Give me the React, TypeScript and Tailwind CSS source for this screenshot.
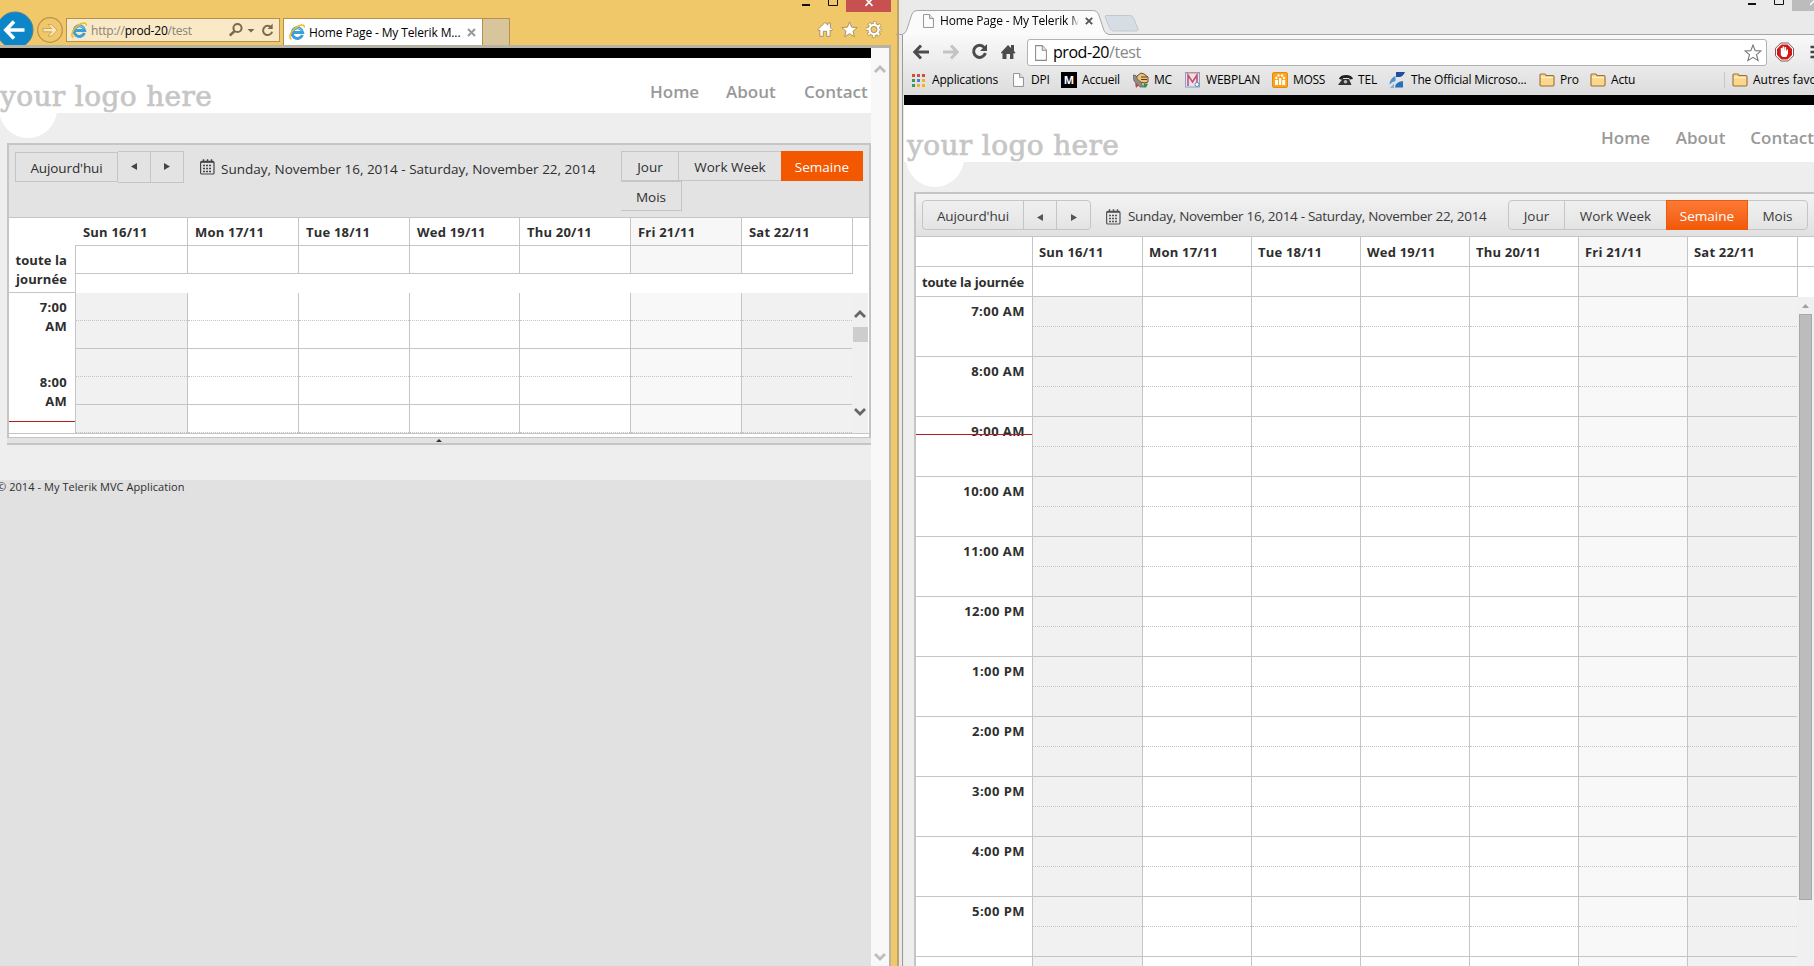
import type { ReactNode } from "react";
import clsx from "clsx";

const days = [
	{ label: "Sun 16/11", ie: "w-[112px]", chrome: "w-[110px]", off: true },
	{ label: "Mon 17/11", ie: "w-[111px]", chrome: "w-[109px]" },
	{ label: "Tue 18/11", ie: "w-[111px]", chrome: "w-[109px]" },
	{ label: "Wed 19/11", ie: "w-[110px]", chrome: "w-[109px]" },
	{ label: "Thu 20/11", ie: "w-[111px]", chrome: "w-[109px]" },
	{ label: "Fri 21/11", ie: "w-[111px]", chrome: "w-[109px]", today: true },
	{ label: "Sat 22/11", ie: "w-[111px]", chrome: "w-[110px]", off: true },
];

const hours = [
	"7:00 AM",
	"8:00 AM",
	"9:00 AM",
	"10:00 AM",
	"11:00 AM",
	"12:00 PM",
	"1:00 PM",
	"2:00 PM",
	"3:00 PM",
	"4:00 PM",
	"5:00 PM",
	"6:00 PM",
];

const RANGE = "Sunday, November 16, 2014 - Saturday, November 22, 2014";

function IeLogo() {
	return (
		<svg width="16" height="16" viewBox="0 0 16 16" fill="none" className="shrink-0">
			<path
				d="M13.4 11A5.300 5.300 0 1 1 13.700 8.600H4.6"
				stroke="#3d9fd6"
				strokeWidth="3"
			/>
			<path d="M3.400 6.800a5.200 5.200 0 0 1 9.400-.2" stroke="#8fd0f2" strokeWidth="1" />
			<path
				d="M2.600 15.200C-1 14.600 1.400 8.200 6 4.200 10.2.6 16 -.4 15.200 3.600"
				stroke="#f2b81c"
				strokeWidth="1.5"
			/>
		</svg>
	);
}

function CalendarIcon({ color }: { color: string }) {
	return (
		<svg width="15" height="16" viewBox="0 0 15 16" fill="none" className="shrink-0">
			<rect x="0.6" y="2.4" width="13.4" height="12.6" rx="1.3" stroke={color} strokeWidth="1.2" />
			<path d="M1 3.2h13" stroke={color} strokeWidth="1.2" />
			<path d="M3.5 .3v3M7.5 .3v3M11.5 .3v3" stroke={color} strokeWidth="1.5" />
			<path
				d="M6 6.500h2M9 6.500h2M3 9.500h2M6 9.500h2M9 9.500h2M3 12.500h2M6 12.500h2M9 12.500h2M3 6.500h2"
				stroke={color}
				strokeWidth="1.600"
			/>
		</svg>
	);
}

function PageIcon({ small }: { small?: boolean }) {
	return (
		<svg
			width={small ? 11 : 12}
			height={small ? 14 : 16}
			viewBox="0 0 12 15"
			preserveAspectRatio="none"
			className="shrink-0"
		>
			<path d="M.6 .6h6.6l4.2 4.3v9.5H.6z" fill="#fdfdfd" stroke="#8a8a8a" strokeWidth="1" />
			<path d="M7.2 .6v4.3h4.2" fill="#e4e4e4" stroke="#8a8a8a" strokeWidth="1" />
		</svg>
	);
}

function FolderIcon() {
	return (
		<svg width="16" height="14" viewBox="0 0 16 14">
			<path
				d="M1 2.2Q1 1 2.2 1h3.4Q6.6 1 7 2.6h6.8Q15 2.6 15 3.8v8Q15 13 13.8 13H2.2Q1 13 1 11.8z"
				fill="#fbd78c"
				stroke="#9a7038"
				strokeWidth="1.1"
			/>
			<path d="M2 4.4h12" stroke="#fff0c6" strokeWidth="1.4" />
		</svg>
	);
}

function Triangle({ left, color = "#454545" }: { left?: boolean; color?: string }) {
	return (
		<svg width="6" height="7" viewBox="0 0 6 7">
			<path d={left ? "M6 0v7L0 3.5z" : "M0 0v7l6-3.5z"} fill={color} />
		</svg>
	);
}

function Chevron({ down, color }: { down?: boolean; color: string }) {
	return (
		<svg width="12" height="10" viewBox="0 0 12 10" fill="none">
			<path d={down ? "M1 2l5 5 5-5" : "M1 8l5-5 5 5"} stroke={color} strokeWidth="2.8" />
		</svg>
	);
}

function SiteHeader({ chrome }: { chrome?: boolean }) {
	return (
		<>
			<div className="h-2.5 bg-black" />
			<div
				className={clsx(
					"relative flex justify-between bg-white",
					chrome ? "h-[57px]" : "h-[55px]",
				)}
			>
				<div
					className={clsx(
						"absolute size-[58px] rounded-full bg-white",
						chrome ? "left-0.5 top-6" : "-left-px top-[22px]",
					)}
				/>
				<div
					className={clsx(
						"relative whitespace-nowrap font-['DejaVu_Serif',serif] text-[28px] leading-[34px] tracking-[0.37px] text-[#c6c6c6] [-webkit-text-stroke:0.7px_#c6c6c6]",
						chrome ? "ml-[3px] mt-6" : "mt-[22px]",
					)}
				>
					your logo here
				</div>
				<nav
					className={clsx(
						"flex shrink-0 text-[17px] leading-6 font-semibold text-[#999]",
						chrome ? "mt-[21px] w-[213px]" : "mt-[22px] w-[221px]",
					)}
				>
					<span className={chrome ? "w-[75px]" : "w-[76px]"}>Home</span>
					<span className={chrome ? "w-[75px]" : "w-[78px]"}>About</span>
					<span>Contact</span>
				</nav>
			</div>
		</>
	);
}

function IeToolbar() {
	return (
		<div className="flex h-[73px] border-b border-[#c5c5c5] bg-[#e3e3e3] pl-1.5 text-[13.5px] font-normal text-[#2e2e2e]">
			<div className="mt-[7px] h-[30px] w-[103px] border border-[#c5c5c5] pt-px text-center leading-[28px] tracking-[-0.1px]">
				Aujourd'hui
			</div>
			<div className="mt-1.5 flex h-8 w-[66px] border border-l-0 border-[#c5c5c5]">
				<div className="flex w-[33px] items-center justify-center border-r border-[#c5c5c5] pb-0.5">
					<Triangle left />
				</div>
				<div className="flex w-8 items-center justify-center pb-0.5">
					<Triangle />
				</div>
			</div>
			<div className="ml-4 mt-3.5">
				<CalendarIcon color="#444" />
			</div>
			<div className="ml-1.5 mt-[13px] w-[400px] whitespace-nowrap leading-[22px]">{RANGE}</div>
			<div className="mt-1.5 flex w-[243px] flex-wrap content-start text-center leading-[30px]">
				<div className="h-[30px] w-[58px] border border-[#c5c5c5]">Jour</div>
				<div className="h-[30px] w-[102px] border-y border-[#c5c5c5]">Work Week</div>
				<div className="h-[30px] w-[82px] bg-[#f35800] pt-px text-white">Semaine</div>
				<div className="h-[30px] w-[61px] border border-l-0 border-[#c5c5c5]">Mois</div>
			</div>
		</div>
	);
}

function IeScheduler() {
	return (
		<div className="ml-[7px] mt-[30px] w-[864px] border-2 border-b-0 border-[#c5c5c5] bg-white text-[13px] font-bold text-[#2e2e2e]">
			<IeToolbar />
			<div className="flex">
				<div className="w-[66px]">
					<div className="h-[75px] border-b border-[#c5c5c5] pr-2 pt-[33px] text-right leading-[19px] tracking-[0.1px]">
						toute la journée
					</div>
					<div className="relative h-[140px] pr-2 text-right leading-[19px] tracking-[0.3px]">
						<div className="ml-auto h-[75px] w-10 pt-[5px]">7:00 AM</div>
						<div className="ml-auto w-10 pt-[5px]">8:00 AM</div>
						<div className="absolute left-0 top-32 h-px w-full bg-[#b02020]" />
					</div>
				</div>
				<div>
					<div className="flex h-7 border-b border-[#c5c5c5]">
						{days.map((day, i) => (
							<div
								key={day.label}
								className={clsx(
									day.ie,
									"border-l pl-[7px] leading-7 tracking-[0.2px]",
									i === 0 ? "border-white" : "border-[#c5c5c5]",
									day.today && "bg-[#f7f7f7]",
								)}
							>
								{day.label}
							</div>
						))}
						<div className="w-px bg-[#c5c5c5]" />
					</div>
					<div className="flex h-7">
						{days.map((day) => (
							<div
								key={day.label}
								className={clsx(
									day.ie,
									"border-b border-l border-[#c5c5c5]",
									day.today && "bg-[#f7f7f7]",
								)}
							/>
						))}
						<div className="w-px bg-[#c5c5c5]" />
					</div>
					<div className="h-[19px] border-l border-[#c5c5c5]" />
					<div className="flex">
						{days.map((day) => (
							<div
								key={day.label}
								className={clsx(
									day.ie,
									"border-l border-[#c5c5c5]",
									day.off && "bg-[#f1f1f1]",
									day.today && "bg-[#f8f8f8]",
								)}
							>
								{[0, 1, 2, 3, 4].map((n) => (
									<div
										key={n}
										className={clsx("h-7 border-b border-[#c5c5c5]", n % 2 === 0 && "border-dotted")}
									/>
								))}
							</div>
						))}
						<div className="flex w-4 flex-col items-center bg-[#f0f0f0]">
							<div className="mt-4 h-[18px]">
								<Chevron color="#666" />
							</div>
							<div className="h-[15px] w-[15px] bg-[#cdcdcd]" />
							<div className="mt-[65px]">
								<Chevron down color="#666" />
							</div>
						</div>
					</div>
				</div>
			</div>
			<div className="h-1 border-t border-[#c5c5c5]" />
			<div className="-mx-0.5 flex h-2 justify-center border-b-2 border-t border-[#c5c5c5] bg-[#e3e3e3] pt-px">
				<svg width="6" height="3" viewBox="0 0 6 3">
					<path d="M0 3l3-3 3 3z" fill="#333" />
				</svg>
			</div>
		</div>
	);
}

function IeChrome() {
	return (
		<div className="flex h-[45px] overflow-hidden bg-[#f0c869] text-[12px]">
			<svg width="66" height="45" viewBox="0 0 66 45" fill="none" className="shrink-0">
				<circle cx="15" cy="30" r="18" fill="#0c86c8" stroke="#4d8596" />
				<path d="M24.5 30H7M14 21.5L5.8 30l8.2 8.5" stroke="#fff" strokeWidth="3.6" />
				<circle cx="50" cy="30" r="12.3" stroke="#b8924a" strokeWidth="1.2" />
				<path
					d="M43 28.5h8.8l-3.8-4h3.6l5.6 5.7-5.6 5.8H48l3.8-4.2H43z"
					fill="#fbe7bb"
					stroke="#c39b4f"
					strokeWidth="0.8"
				/>
			</svg>
			<div className="mt-[18px] flex h-6 w-[214px] shrink-0 items-center border border-[#b5924c] bg-[#fae9c7] pl-1">
				<IeLogo />
				<span className="ml-1 w-[138px] pt-px text-[12px] tracking-[-0.22px] text-[#8a8272]">
					http://<span className="text-black">prod-20</span>/test
				</span>
				<svg width="48" height="16" viewBox="0 0 48 16" fill="none" stroke="#7b6a4c">
					<circle cx="8.500" cy="6" r="4.1" strokeWidth="2" />
					<path d="M5.500 9.1L.8 13.500" strokeWidth="2.6" />
					<path d="M18.5 7h7L22 10.500z" fill="#7b6a4c" stroke="none" />
					<path d="M42.2 5.500a4.6 4.6 0 1 0 .9 4.2" strokeWidth="2" />
					<path d="M43.7 1.500v5.4h-5.2z" fill="#7b6a4c" stroke="none" />
				</svg>
			</div>
			<div className="ml-[3px] mt-[18px] flex w-[200px] shrink-0 items-center border border-b-0 border-[#b5924c] bg-white pl-[5px] text-black">
				<IeLogo />
				<span className="ml-1 w-[158px] whitespace-nowrap pt-px text-[12px] tracking-[-0.13px]">
					Home Page - My Telerik M...
				</span>
				<svg width="9" height="9" viewBox="0 0 9 9" stroke="#999" strokeWidth="2">
					<path d="M1 1l7 7M8 1L1 8" />
				</svg>
			</div>
			<div className="mt-[18px] w-[27px] shrink-0 border border-b-0 border-l-0 border-[#b5924c] bg-[#d8c59c]" />
			<div className="ml-auto w-[97px]">
				<div className="flex h-3">
					<svg width="46" height="12" viewBox="0 0 46 12" fill="none" className="shrink-0">
						<path d="M2 5h8" stroke="#111" strokeWidth="2" />
						<path d="M28.5-3v8.5h9V-3" stroke="#111" />
					</svg>
					<div className="flex w-[45px] justify-center bg-[#c75050]">
						<svg width="8" height="8" viewBox="0 0 8 8" stroke="#fff" strokeWidth="1.6">
							<path d="M.5-1.5l7 7.5M7.5-1.5L.5 6" />
						</svg>
					</div>
				</div>
				<svg width="68" height="20" viewBox="0 0 68 20" fill="#fff" stroke="#a38a56" strokeWidth="0.9" className="ml-[17px] mt-2">
					<path d="M.8 9.6L8 2.4l2.8 2.7V3h2.6v4.6l2 2-1.2 1.3-1.1-.9v6.3H9.7v-5H6.3v5H2.9V10l-1 .9z" />
					<path d="M32.5 2l2.2 5.2 5.6.4-4.3 3.6 1.4 5.5-4.9-3-4.8 3 1.3-5.5-4.2-3.6 5.6-.4z" />
					<circle cx="57" cy="9.5" r="6.4" stroke="#a38a56" strokeWidth="3.6" strokeDasharray="3.1 1.927" strokeDashoffset="1.55" fill="none" />
					<circle cx="57" cy="9.500" r="5.600" stroke="#a38a56" strokeWidth="1.600" />
					<circle cx="57" cy="9.5" r="6.4" stroke="#fff" strokeWidth="2.6" strokeDasharray="2 3.027" strokeDashoffset="1" fill="none" />
					<circle cx="57" cy="9.5" r="4.5" stroke="#fff" strokeWidth="2.4" fill="none" />
					<circle cx="57" cy="9.5" r="3.100" fill="#f0c869" />
				</svg>
			</div>
		</div>
	);
}

function IeWindow() {
	return (
		<div className="flex h-full w-[899px] shrink-0 border-r-2 border-[#bfa269] bg-[#f0c869]">
			<div className="w-[897px]">
				<IeChrome />
				<div className="flex h-[921px]">
					<div className="w-[891px] border-r-2 border-t-[3px] border-[#b5b2a6] bg-[#f8f8f8]">
						<div className="flex h-full">
							<div className="w-[871px] shrink-0 overflow-hidden bg-[#eee]">
								<SiteHeader />
								<IeScheduler />
								<footer className="mt-[35px] h-[600px] bg-[#e1e1e1] pt-px text-[11px] leading-[11px] text-[#2e2e2e]">
									<span className="-ml-[3px] tracking-[0.06px]">© 2014 - My Telerik MVC Application</span>
								</footer>
							</div>
							<div className="flex flex-1 flex-col items-center justify-between pb-1 pt-4">
								<Chevron color="#bdbdbd" />
								<Chevron down color="#bdbdbd" />
							</div>
						</div>
					</div>
				</div>
			</div>
		</div>
	);
}

function Bookmark({
	icon,
	label,
	width,
	slot = "w-[21px]",
	track = "tracking-[-0.2px]",
}: {
	icon: ReactNode;
	label: string;
	width: string;
	slot?: string;
	track?: string;
}) {
	return (
		<div className={clsx("flex shrink-0 items-center", width)}>
			<span className={clsx("shrink-0", slot)}>{icon}</span>
			<span className={clsx("whitespace-nowrap pb-px", track)}>{label}</span>
		</div>
	);
}

const appColors = [
	"#d64b3c", "#d64b3c", "#d64b3c",
	"#3c9a58", "#4a80e8", "#efb41e",
	"#3c9a58", "#efb41e", "#efb41e",
];

function BookmarksBar() {
	return (
		<div className="flex h-7 pl-[9px] text-[12px] text-black">
			<Bookmark
				width="w-[101px]"
				slot="w-5"
				label="Applications"
				icon={
					<svg width="13" height="13" viewBox="0 0 13 13">
						{appColors.map((c, i) => (
							<rect key={i} x={(i % 3) * 5} y={Math.floor(i / 3) * 5} width="3" height="3" fill={c} />
						))}
					</svg>
				}
			/>
			<Bookmark width="w-12" slot="w-[18px]" label="DPI" icon={<PageIcon small />} />
			<Bookmark
				width="w-[72px]"
				label="Accueil"
				icon={
					<span className="flex size-4 items-center justify-center bg-black text-[11px] font-bold text-white">
						M
					</span>
				}
			/>
			<Bookmark
				width="w-[52px]"
				label="MC"
				icon={
					<svg width="16" height="16" viewBox="0 0 16 16">
						<path d="M4 4l4-3 3 1 4 3v5l-3 1-6-1-3-3z" fill="#ecc27c" stroke="#6b4a26" />
						<path d="M0 3l3 .5 2 4.500 3 2 2 5H7L1 9z" fill="#8b8f86" stroke="#4d4a40" strokeWidth=".6" />
						<path d="M8 5h6M8 7.500h6" stroke="#5c3d1e" />
						<path d="M11 11l4 1-2 3.500h-3z" fill="#3d8a4e" />
						<path d="M2 11l4 2-3 3z" fill="#c3463a" />
					</svg>
				}
			/>
			<Bookmark
				width="w-[87px]"
				label="WEBPLAN"
				track="tracking-[-0.2px]"
				icon={
					<svg width="15" height="16" viewBox="0 0 15 16" fill="none">
						<rect x="0.5" y="0.5" width="14" height="14.5" fill="#e6e3ef" stroke="#8aa0d0" />
						<path d="M3 14V3l4.5 7L12 3v9" stroke="#c8516c" strokeWidth="1.6" />
						<path d="M1 1h13" stroke="#d88a7a" />
						<circle cx="12" cy="12.5" r="2" fill="#fff" stroke="#5c8f9c" />
					</svg>
				}
			/>
			<Bookmark
				width="w-[65px]"
				label="MOSS"
				track="tracking-[-0.35px]"
				icon={
					<svg width="16" height="16" viewBox="0 0 16 16">
						<rect x="0.5" y="0.5" width="15" height="15" rx="1.5" fill="#fba51f" stroke="#e88a10" />
						<g fill="#fff">
							<circle cx="4.300" cy="6" r="1.2" />
							<circle cx="6.500" cy="3.5" r="1.2" />
							<circle cx="10" cy="3.5" r="1.2" />
							<circle cx="12" cy="6" r="1.2" />
							<path d="M3 8h3v5H3zM7 6h2.200v7H7zM10.200 8h3v5h-3z" />
						</g>
					</svg>
				}
			/>
			<Bookmark
				width="w-[52px]"
				label="TEL"
				icon={
					<svg width="16" height="12" viewBox="0 0 16 12">
						<path d="M2 5Q3 1 9 1t7 4l-3 .6-1-1.6H6.400L5 5.800z" fill="#222" />
						<path d="M5.500 5h6.500l2.500 6H1z" fill="#333" />
						<circle cx="8.500" cy="7.800" r="1.800" fill="#bbb" />
					</svg>
				}
			/>
			<Bookmark
				width="w-[150px]"
				slot="w-[22px]"
				label="The Official Microso..."
				track="tracking-[-0.2px]"
				icon={
					<svg width="16" height="16" viewBox="0 0 16 16">
						<path d="M7 0h9q-2 4.500-5 5H7z" fill="#1f4fa0" />
						<path d="M6.500 4v5Q3 9.500 .5 12.500 1 6 6.500 4z" fill="#4b92cf" />
						<path d="M14 9v6.500H6Q6 10 14 9z" fill="#2a6fb8" />
						<path d="M5 11.500v4.500H1z" fill="#7db4dd" />
					</svg>
				}
			/>
			<Bookmark width="w-[51px]" label="Pro" icon={<FolderIcon />} />
			<Bookmark width="w-[134px]" label="Actu" icon={<FolderIcon />} />
			<div className="mr-[7px] mt-1.5 h-4 w-px bg-[#c8c8c8]" />
			<Bookmark width="w-[82px]" label="Autres favoris" icon={<FolderIcon />} track="tracking-[0px]" />
		</div>
	);
}

function ChromeTop() {
	return (
		<div className="h-[34px] bg-[#eaeaea]">
			<div className="flex h-[34px]">
				<div className="relative flex h-[34px] w-[210px] shrink-0 pl-[21px]">
					<svg width="250" height="35" viewBox="0 0 250 35" className="absolute -left-1.5 top-0">
						<path
							d="M0 35.500V34.500H6Q9 34 10.500 30.500L16 14Q17.500 10.500 21 10.500H197.500Q201 10.500 202.500 14L208 30.500Q209.500 34 213 34.500V35.500z"
							fill="#fbfbfb"
							stroke="#a6a6a6"
						/>
						<path
							d="M210 15.500h24Q236.500 15.500 237.500 18l4.500 11q.6 2-2 2h-22q-3 0-4-2.500l-4.500-10.500q-1-2.500.5-2.500z"
							fill="#d7dde4"
							stroke="#c4c8cd"
						/>
					</svg>
					<div className="relative flex h-6 items-center self-end pb-[2px]">
						<PageIcon small />
						<span className="ml-1.5 w-[139px] overflow-hidden whitespace-nowrap bg-gradient-to-r from-black from-94% to-transparent bg-clip-text text-[12px] tracking-[-0.15px] text-transparent">
							Home Page - My Telerik M
						</span>
						<svg width="8" height="8" viewBox="0 0 8 8" stroke="#555" strokeWidth="1.800" className="ml-1.5">
							<path d="M.8 .8l6.400 6.400M7.200 .8L.8 7.200" />
						</svg>
					</div>
				</div>
				<div className="ml-auto flex">
					<svg width="46" height="12" viewBox="0 0 46 12" fill="none">
						<path d="M2 4h8" stroke="#111" strokeWidth="2" />
						<path d="M28.500-3v7.500h9V-3" stroke="#111" />
					</svg>
					<div className="flex h-[11px] w-[22px] justify-end bg-[#bcbcbc]">
						<svg width="4" height="6" viewBox="0 0 4 6" stroke="#fff" strokeWidth="1.500">
							<path d="M0 5l5-5" />
						</svg>
					</div>
				</div>
			</div>
		</div>
	);
}

function ChromeAddress() {
	return (
		<div className="flex h-8 items-start border-t border-[#a6a6a6] pt-1">
			<svg width="124" height="26" viewBox="0 0 124 26" fill="none" className="shrink-0">
				<path d="M26 13H12.500M18 6.500L11.800 13l6.200 6.500" stroke="#4c4c4c" strokeWidth="3" />
				<path d="M40 13h13.500M48 6.500L54.200 13 48 19.500" stroke="#c3c3c3" strokeWidth="3" />
				<path d="M81.300 8.600a6 6 0 1 0 1.100 5.400" stroke="#4c4c4c" strokeWidth="3" />
				<path d="M84 5v7h-7z" fill="#4c4c4c" />
				<path
					d="M98 13.500L105 6l3 3V6h3v6l1.500 1.500-1.300 1.300-.8-.7v6H107v-5h-3.500v5h-4v-6l-.7.600z"
					fill="#4c4c4c"
				/>
			</svg>
			<div className="flex h-[27px] w-[740px] shrink-0 items-center rounded-[3px] border border-[#b2b2b2] bg-white pl-[7px] pr-1">
				<PageIcon />
				<span className="ml-1.5 flex-1 pb-px text-[16px] tracking-[-0.45px] text-black">
					prod-20<span className="text-[#888]">/test</span>
				</span>
				<svg width="18" height="18" viewBox="0 0 18 18" fill="#fff" stroke="#777" strokeWidth="1.100">
					<path d="M9 1l2.200 5.600 5.900.3-4.600 3.800 1.600 5.900L9 13.300l-5.100 3.300 1.600-5.900L.9 6.900l5.900-.3z" />
				</svg>
			</div>
			<svg width="48" height="26" viewBox="0 0 48 26" fill="none" className="shrink-0">
				<path
					d="M13.800 4h7.400l5.300 5.300v7.400L21.200 22h-7.400l-5.300-5.300V9.300z"
					fill="#fff"
					stroke="#8c5050"
				/>
				<path d="M14.400 5.500h6.200l4.400 4.400v6.200l-4.400 4.400h-6.200L10 16.100V9.900z" fill="#cc1a1a" />
				<path
					d="M13.800 12.500V9h1.500v3l.3-4.500h1.500l.2 4.500.4-4h1.400v4.500l.7-2h1.200v4l-1.500 3.500h-4l-1.700-2z"
					fill="#fff"
				/>
				<path d="M43.500 8h6M43.500 13h6M43.500 18h6" stroke="#444" strokeWidth="2.600" />
			</svg>
		</div>
	);
}

function ChromeToolbar() {
	return (
		<div className="flex h-[43px] items-start border-b border-[#c5c5c5] bg-gradient-to-b from-[#f3f3f3] to-[#e1e1e1] pl-1.5 pt-1.5 text-[13.5px] font-normal leading-7 text-[#3a3a3a]">
			<div className="flex h-[30px] w-[169px] rounded border border-[#c5c5c5] text-center">
				<div className="w-[100px] pt-px tracking-[-0.1px]">Aujourd'hui</div>
				<div className="flex w-[34px] items-center justify-center border-x border-[#c5c5c5] pt-1">
					<Triangle left color="#555" />
				</div>
				<div className="flex w-[33px] items-center justify-center pt-1">
					<Triangle color="#555" />
				</div>
			</div>
			<div className="ml-[15px] mt-[9px]">
				<CalendarIcon color="#555" />
			</div>
			<div className="ml-[7px] mt-0.5 w-[380px] whitespace-nowrap tracking-[-0.29px]">{RANGE}</div>
			<div className="flex h-[30px] w-[300px] shrink-0 rounded border border-[#c5c5c5] text-center">
				<div className="w-14 border-r border-[#c5c5c5] pt-px">Jour</div>
				<div className="w-[101px] pt-px">Work Week</div>
				<div className="-my-px w-[82px] border border-[#ee5a08] bg-gradient-to-b from-[#fb7a34] to-[#f25a02] pt-px text-white">
					Semaine
				</div>
				<div className="w-[59px] pt-px">Mois</div>
			</div>
		</div>
	);
}

function ChromeScheduler() {
	return (
		<div className="ml-[10px] mt-[30px] w-[900px] border-l-2 border-t-2 border-[#c5c5c5] bg-white text-[13px] font-bold text-[#2e2e2e]">
			<ChromeToolbar />
			<div className="flex h-[30px] border-b border-[#c5c5c5] leading-[30px]">
				<div className="w-[116px]" />
				{days.map((day) => (
					<div
						key={day.label}
						className={clsx(
							day.chrome,
							"border-l border-[#c5c5c5] pl-1.5 tracking-[0.2px]",
							day.today && "bg-[#f7f7f7]",
						)}
					>
						{day.label}
					</div>
				))}
				<div className="w-px bg-[#c5c5c5]" />
			</div>
			<div className="flex h-[30px] leading-[30px]">
				<div className="w-[116px] whitespace-nowrap border-b border-[#c5c5c5] pr-2 text-right tracking-[-0.15px]">
					toute la journée
				</div>
				{days.map((day) => (
					<div
						key={day.label}
						className={clsx(
							day.chrome,
							"border-b border-l border-[#c5c5c5]",
							day.today && "bg-[#f7f7f7]",
						)}
					/>
				))}
				<div className="w-px bg-[#c5c5c5]" />
			</div>
			<div className="flex">
				<div className="relative w-[116px] shrink-0">
					{hours.map((hour) => (
						<div
							key={hour}
							className="h-[60px] border-b border-[#c5c5c5] pr-[7px] pt-[5px] text-right leading-[19px] tracking-[0.45px]"
						>
							{hour}
						</div>
					))}
					<div className="absolute left-0 top-[137px] h-px w-full bg-[#b02020]" />
				</div>
				{days.map((day) => (
					<div
						key={day.label}
						className={clsx(
							day.chrome,
							"shrink-0 border-l border-[#c5c5c5]",
							day.off && "bg-[#f1f1f1]",
							day.today && "bg-[#f8f8f8]",
						)}
					>
						{hours.map((hour) => (
							<div key={hour} className="h-[60px] border-b border-[#c5c5c5]">
								<div className="h-[30px] border-b border-dotted border-[#c5c5c5]" />
							</div>
						))}
					</div>
				))}
				<div className="w-[17px] shrink-0 bg-[#f0f0f0] pl-0.5 pt-[7px]">
					<svg width="7" height="4" viewBox="0 0 7 4" className="ml-[3px]">
						<path d="M0 4l3.500-4L7 4z" fill="#a0a0a0" />
					</svg>
					<div className="mt-1.5 h-[586px] w-[13px] border border-[#a8a8a8] bg-[#bcbcbc]" />
				</div>
			</div>
		</div>
	);
}

function ChromeWindow() {
	return (
		<div className="flex h-full w-[915px] shrink-0 bg-[#e8e8e8]">
			<div className="w-[3px] shrink-0" />
			<div className="w-[912px]">
				<ChromeTop />
				<div className="h-[932px] border-l border-[#9a9a9a]">
					<div className="h-[61px] bg-gradient-to-b from-[#fafafa] to-[#dcdcdc]">
						<ChromeAddress />
						<BookmarksBar />
					</div>
					<div className="ml-px h-[871px] overflow-hidden bg-[#eee]">
						<SiteHeader chrome />
						<ChromeScheduler />
					</div>
				</div>
			</div>
		</div>
	);
}

export default function App() {
	return (
		<div className="flex h-[966px] w-[1814px] overflow-hidden font-['Open_Sans',sans-serif]">
			<IeWindow />
			<ChromeWindow />
		</div>
	);
}
